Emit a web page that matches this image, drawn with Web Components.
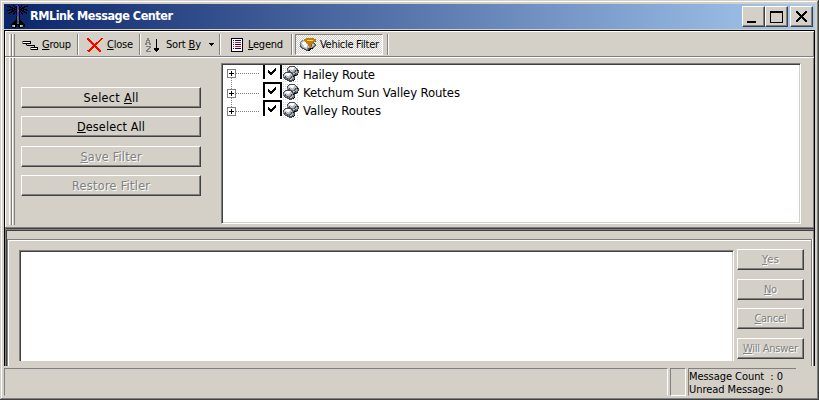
<!DOCTYPE html>
<html lang="en"><head><meta charset="utf-8"><title>RMLink Message Center</title>
<style>html,body{margin:0;width:819px;height:400px;overflow:hidden;background:#d4d0c8}</style></head>
<body><message-center></message-center>
<script>
const define=(name,html,ready)=>{
  const t=document.createElement('template');t.innerHTML=html;
  customElements.define(name,class extends HTMLElement{
    constructor(){super();this.attachShadow({mode:'open'}).append(t.content.cloneNode(true));}
    connectedCallback(){if(ready)ready(this,this.shadowRoot);}
  });
};

/* Single-line caption spread to the width given in its "w" attribute. */
define('fit-label',`<style>:host{display:block;white-space:pre;line-height:14px}span{display:inline-block}::slotted(u){text-decoration-thickness:1px;text-underline-offset:1px}</style><span><slot></slot></span>`,(el,r)=>{
  const s=r.querySelector('span'),w=+el.getAttribute('w');
  if(!w)return;
  const n=el.textContent.length,d=(w-s.getBoundingClientRect().width)/(n-1);
  s.style.letterSpacing=d+'px';s.style.marginRight=-d+'px';
});

/* Small picture drawn from rows of palette characters. */
const colours={k:'#000',K:'#222',g:'#808080',d:'#454b55',l:'#b0b4b8',w:'#fff',r:'#f00',y:'#ffe060',b:'#000080',p:'#5a30d0',n:'#209050',o:'#c87c08',O:'#9a5c00',s:'#c8d4dc',e:'#d0d0d0'};
const art={
 bird:['......k..ppk..k......','kkkk...k.kppk.k..kkkk','...kkk..kkppkk.kkk...','.....kkk.kppk.kkk....','..kkkk.kkknpkkk.kkkk.','kkk..kkk.kpgk.kkk..kk','....kkk.kknpkk.kkk...','..kkk..k.kppk.k..kkk.','.kk...kk.kppk.kk...k.','......k..kppk..k.....','..........ppk........','.........knpk........','.........kgpk........','.........knpk........','.........knnk........','........kkpnkk.......','.......kkkppkkk......','......kkkkpnkkkk.....','.....kkkkknnkkkkk....','....kkkkkkkkkkkkkk...','....kglekk.kkelgkk...','....kglekk.kkelgkk...','.....kkkk...kkkk.....'],
 group:['gkkkkkkkk.......','gwwwwwwwk.......','gkkkkkkkk.......','....k...........','....gkkkkkkkk...','............k...','........gkkkkkkk','........gwwwwwwk','........gkkkkkkk'],
 close:['rr............rr','rrr..........rry','.rrr........rry.','.yrrr......rry..','...rrr...rrry...','....rrr.rrry....','.....rrrrry.....','......rrry......','.....rrrrr......','....rrryrrr.....','...rrry..rrr....','..rrry....rrr...','rrrry......rrry.','.rry........rry.'],
 sort:['..gg............','..gg.......k....','.gggg......k....','.g..g......k....','.gggg......k....','gg..gg.....k....','gg..gg.....k....','...........k....','.ggggg.....k....','....gg.....k....','...gg....kkkkk..','..gg.....kkkkk..','.gg.......kkk...','.ggggg.....k....'],
 legend:['kkkkkkkkkkkk','kwwwwwwwwwwk','kwbwbbbbbbwk','kwwwwwwwwwwk','kwrwrrrrrrwk','kwwwwwwwwwwk','kwbwbbbbbbwk','kwwwwwwwwwwk','kwrwrrrrrrwk','kwwwwwwwwwwk','kwbwbbbbbbwk','kwwwwwwwwwwk','kwwwwwwwwwwk','kkkkkkkkkkkk'],
 filter:['......oooooooo..','....oooooooooooo','..gloooyyyyyyooo','.glssooooooooooO','gsswwwoooooooO..','glwwwwsoooooggd.','glswwwwsgooOssgd','dlsswwwsgooOslgd','dglswwwlsooOlgd.','.dglsssllgoldd..','..ddglsgddkkk...','....ddggdkk.....','......ddkk......'],
 cars:['e.e.e.dddddd..e.','.....dlwwwwsd...','e.e.dlwwwwwslde.','....dssswwslsgd.','e.e.gldslslldgkd','....gddgsllgdlgd','e.dddddddggdllgd','.dlwwwwsddsldgd.','dlwwwwwsldgdddk.','dssswwslsgdkkde.','gldslslldgkd....','gddgsllgdlgd..e.','.dggdggdllgd....','e.dddgdsldgk..e.','....ddddddk.....','e.e...ddd.e.e.e.'],
 check:['.......k','......kk','k....kkk','kk..kkk.','kkkkkk..','.kkkk...','..kk....'],
 plus:['ggggggggg','gwwwwwwwg','gwwwkwwwg','gwwwkwwwg','gwkkkkkwg','gwwwkwwwg','gwwwkwwwg','gwwwwwwwg','ggggggggg'],
 arrow:['kkkkk','.kkk.','..k..'],
 min:['kkkkkkkkk','kkkkkkkkk'],
 max:['kkkkkkkkkkkkk','kkkkkkkkkkkkk',...Array(9).fill('k...........k'),'kkkkkkkkkkkkk'],
 x:['kk.......kk','kkk.....kkk','.kkk...kkk.','..kkk.kkk..','...kkkkk...','....kkk....','...kkkkk...','..kkk.kkk..','.kkk...kkk.','kkk.....kkk','kk.......kk']
};
define('pixel-icon',`<style>:host{display:block;flex:none}svg{display:block}</style><div></div>`,(el,r)=>{
  const a=art[el.getAttribute('name')],w=a[0].length;
  r.querySelector('div').innerHTML=`<svg width="${w}" height="${a.length}" shape-rendering="crispEdges">`+a.map((row,y)=>[...row].map((c,x)=>colours[c]?`<rect x="${x}" y="${y}" width="1" height="1" fill="${colours[c]}"/>`:'').join('')).join('')+'</svg>';
});

define('push-button',`<style>:host{display:flex;box-sizing:border-box;height:21px;align-items:center;justify-content:center;background:#d4d0c8;border:1px solid;border-color:#fff #404040 #404040 #fff;box-shadow:inset -1px -1px #808080;font-size:var(--size,11px)}:host([disabled]){color:#808080;text-shadow:1px 1px #fff}</style><slot></slot>`);
define('caption-button',`<style>:host{display:flex;box-sizing:border-box;width:23px;height:21px;background:#d4d0c8;border:1px solid;border-color:#fff #404040 #404040 #fff;box-shadow:inset -1px -1px #808080}</style><slot></slot>`);
define('title-bar',`<style>:host{display:flex;box-sizing:border-box;height:25px;background:linear-gradient(90deg,#0a246a,#a6caf0);color:#fff;padding:2px 2px 2px 0}
.i{width:23px;margin:-1px 0 0 3px}fit-label{font-weight:bold;font-size:12.5px;line-height:20px}.b{display:flex;margin-left:auto}caption-button:last-child{margin-left:2px}
.min{margin:14px 0 0 4px}.max{margin:4px 0 0 4px}.x{margin:4px 0 0 5px}</style>
<pixel-icon class="i" name="bird"></pixel-icon><fit-label w="143">RMLink Message Center</fit-label>
<div class="b"><caption-button><pixel-icon class="min" name="min"></pixel-icon></caption-button><caption-button><pixel-icon class="max" name="max"></pixel-icon></caption-button><caption-button><pixel-icon class="x" name="x"></pixel-icon></caption-button></div>`);
define('tool-grip',`<style>:host{display:block;width:6px;background:linear-gradient(90deg,#fff 1px,#d4d0c8 1px 2px,#808080 2px 3px,#fff 3px 4px,#d4d0c8 4px 5px,#808080 5px)}</style>`);
define('tool-sep',`<style>:host{display:block;width:2px;height:21px;background:linear-gradient(90deg,#808080 1px,#fff 1px)}</style>`);
define('tool-bar',`<style>:host{display:grid;box-sizing:border-box;height:26px;padding:2px 0 0 4px;grid-template-columns:12px 56px 6px 56px 6px 74px 6px 66px 4px 92px 3px;border-top:1px solid #fff;border-bottom:1px solid #808080;font-size:11px}
.t{display:flex;height:21px;align-items:center}.p{box-sizing:border-box;width:88px;border:1px solid;border-color:#808080 #fff #fff #808080;background:repeating-conic-gradient(#fff 0 25%,#d4d0c8 0 50%) 0 0/2px 2px}</style>
<tool-grip></tool-grip>
<div class="t"><pixel-icon name="group" style="margin:2px 4px 0 1px"></pixel-icon><fit-label w="29"><u>G</u>roup</fit-label></div><tool-sep></tool-sep>
<div class="t"><pixel-icon name="close" style="margin:1px 4px 0 4px"></pixel-icon><fit-label w="26"><u>C</u>lose</fit-label></div><tool-sep></tool-sep>
<div class="t"><pixel-icon name="sort" style="margin-right:5px"></pixel-icon><fit-label w="35">Sort <u>B</u>y</fit-label><pixel-icon name="arrow" style="margin-left:8px"></pixel-icon></div><tool-sep></tool-sep>
<div class="t"><pixel-icon name="legend" style="margin:0 5px 0 6px"></pixel-icon><fit-label w="35"><u>L</u>egend</fit-label></div><tool-sep></tool-sep>
<div class="t p"><pixel-icon name="filter" style="margin:0 4px 0 4px"></pixel-icon><fit-label w="59">Vehicle Filter</fit-label></div><tool-sep></tool-sep>`);
define('route-row',`<style>:host{display:flex;height:18px;font-size:13px}
.e{margin-top:6px}.d{width:24px;height:1px;margin:10px 3px 0 0;background:repeating-linear-gradient(90deg,#808080 0 1px,#fff 1px 2px)}
:host([first]) .e{margin-top:4px}:host([first]) .d{margin-top:8px}:host([first]) .c{border-top:0;padding-top:3px;height:14px;margin-top:0}
.c{box-sizing:border-box;width:19px;height:16px;border:solid #000;border-width:2px 2px 0;padding:3px 0 0 3px;margin-right:1px;margin-top:-1px}.v{margin:1px 4px 0 0}</style>
<pixel-icon class="e" name="plus"></pixel-icon><div class="d"></div><div class="c"><pixel-icon name="check"></pixel-icon></div><pixel-icon class="v" name="cars"></pixel-icon><slot></slot>`);
define('route-tree',`<style>:host{display:block;box-sizing:border-box;width:580px;height:161px;background:repeating-linear-gradient(#808080 0 1px,transparent 1px 2px) 9px 10px/1px 36px no-repeat,#fff;border:1px solid;border-color:#808080 #fff #fff #808080;box-shadow:inset 1px 1px #404040,inset -1px -1px #d4d0c8;padding:1px 0 0 5px}fit-label{line-height:18px;margin-top:.5px}</style>
<route-row first><fit-label w="72">Hailey Route</fit-label></route-row><route-row><fit-label w="157">Ketchum Sun Valley Routes</fit-label></route-row><route-row><fit-label w="78">Valley Routes</fit-label></route-row>`);
define('filter-panel',`<style>:host{display:flex;box-sizing:border-box;height:170px;border-top:1px solid #fff;padding-left:4px}
tool-grip{height:167px}.b{display:flex;flex-direction:column;width:180px;padding:29px 0 0 6px;--size:12.5px}push-button{margin-bottom:8px}push-button:nth-child(2){margin-bottom:9px}route-tree{margin:5px 0 0 20px}</style>
<tool-grip></tool-grip><div class="b"><push-button><fit-label w="55">Select <u>A</u>ll</fit-label></push-button><push-button><fit-label w="68"><u>D</u>eselect All</fit-label></push-button><push-button disabled><fit-label w="61"><u>S</u>ave Filter</fit-label></push-button><push-button disabled><fit-label w="78">Restore Fitler</fit-label></push-button></div><route-tree></route-tree>`);
define('message-panel',`<style>:host{display:block;box-sizing:border-box;height:139px;border-left:1px solid #808080;box-shadow:inset 1px 0 #404040}
.s{height:3px;border-top:1px solid #808080;background:linear-gradient(#404040 1px,#808080 1px 2px,#404040 2px)}
.p{display:flex;box-sizing:border-box;height:127px;margin:8px 2px 0 1px;border:1px solid #808080;border-bottom:0;box-shadow:inset 1px 1px #fff,1px 0 #fff;padding:10px 0 0 11px}
.m{box-sizing:border-box;width:715px;height:111px;background:#fff;border:solid;border-width:1px 1px 0;border-color:#808080 #fff #fff #808080;box-shadow:inset 1px 1px #404040,inset -1px 0 #d4d0c8}
.b{width:67px;margin:-1px 0 0 3px}push-button{margin-bottom:9px}push-button:nth-child(2){margin-bottom:8px}</style>
<div class="s"></div><div class="p"><div class="m"></div><div class="b"><push-button disabled><fit-label w="17"><u>Y</u>es</fit-label></push-button><push-button disabled><fit-label w="13"><u>N</u>o</fit-label></push-button><push-button disabled><fit-label w="32"><u>C</u>ancel</fit-label></push-button><push-button disabled><fit-label w="55"><u>W</u>ill Answer</fit-label></push-button></div></div>`);
define('status-bar',`<style>:host{display:flex;height:28px;font-size:11px;gap:2px}div{box-sizing:border-box;border:1px solid;border-color:#808080 #fff transparent #808080}
.a{width:664px}.b{width:16px;border-bottom-color:#fff}.c{width:108px;border-right:0;padding:1px 0 0 0}.r{display:flex;height:13px;border:0}fit-label{line-height:13px}</style>
<div class="a"></div><div class="b"></div><div class="c"><div class="r"><fit-label w="94">Message Count  : 0</fit-label></div><div class="r"><fit-label w="94">Unread Message: 0</fit-label></div></div>`);
define('message-center',`<style>:host{display:block;box-sizing:border-box;width:819px;height:400px;background:#d4d0c8;font-family:"DejaVu Sans Condensed","DejaVu Sans",sans-serif;font-stretch:condensed;color:#000;padding:4px;box-shadow:inset -1px -1px #404040,inset 1px 1px #d4d0c8,inset -2px -2px #808080,inset 2px 2px #fff}
.f{box-sizing:border-box;height:336px;margin-top:1px;border:solid #000;border-width:1px 1px 0;box-shadow:inset 1px 0 #fff,inset -1px 0 #808080}status-bar{margin-top:2px}</style>
<title-bar></title-bar><div class="f"><tool-bar></tool-bar><filter-panel></filter-panel><message-panel></message-panel></div><status-bar></status-bar>`);
</script></body></html>
